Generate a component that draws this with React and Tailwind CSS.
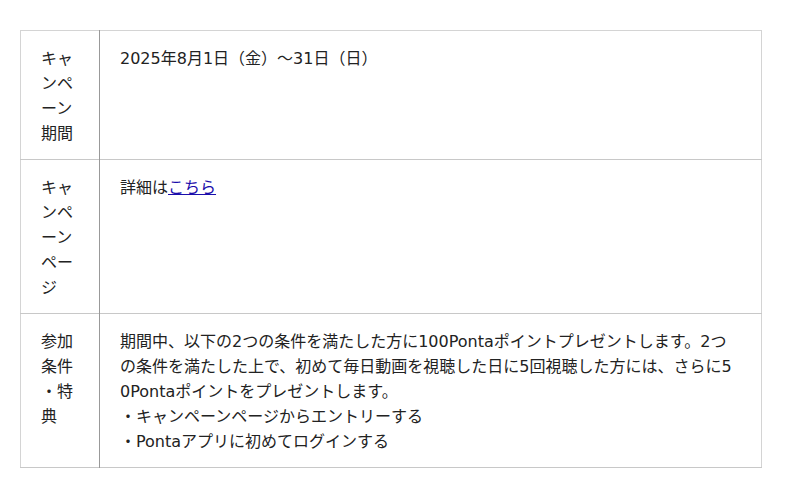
const rows = [
  {
    label: "キャンペーン期間",
    body: <>2025年8月1日（金）〜31日（日）</>,
  },
  {
    label: "キャンペーンページ",
    body: (
      <>
        詳細は
        <a href="#" className="text-[#1a0dab] underline">
          こちら
        </a>
      </>
    ),
  },
  {
    label: "参加条件・特典",
    body: (
      <>
        期間中、以下の2つの条件を満たした方に100Pontaポイントプレゼントします。2つの条件を満たした上で、初めて毎日動画を視聴した日に5回視聴した方には、さらに50Pontaポイントをプレゼントします。
        <br />・キャンペーンページからエントリーする
        <br />・Pontaアプリに初めてログインする
      </>
    ),
  },
];

export default function App() {
  return (
    <div
      className="w-[800px] h-[498px] bg-white pt-[30px] px-[20px] text-[16px] leading-[25px] text-[#222]"
      style={{ fontFamily: '"DejaVu Sans", "Noto Sans CJK JP", sans-serif' }}
    >
      <table className="w-[742px] border-collapse border border-[#d4d4d4]">
        <tbody>
          {rows.map((row, i) => (
            <tr key={i} className="border-b border-[#c8c8c8]">
              <th className="w-[79px] align-top text-left font-normal px-[20px] pt-[15px] pb-[13px] border-r border-[#999] break-all [line-break:anywhere]">
                {row.label}
              </th>
              <td className="align-top px-[20px] pt-[15px] pb-[13px] break-all">
                {row.body}
              </td>
            </tr>
          ))}
        </tbody>
      </table>
    </div>
  );
}
